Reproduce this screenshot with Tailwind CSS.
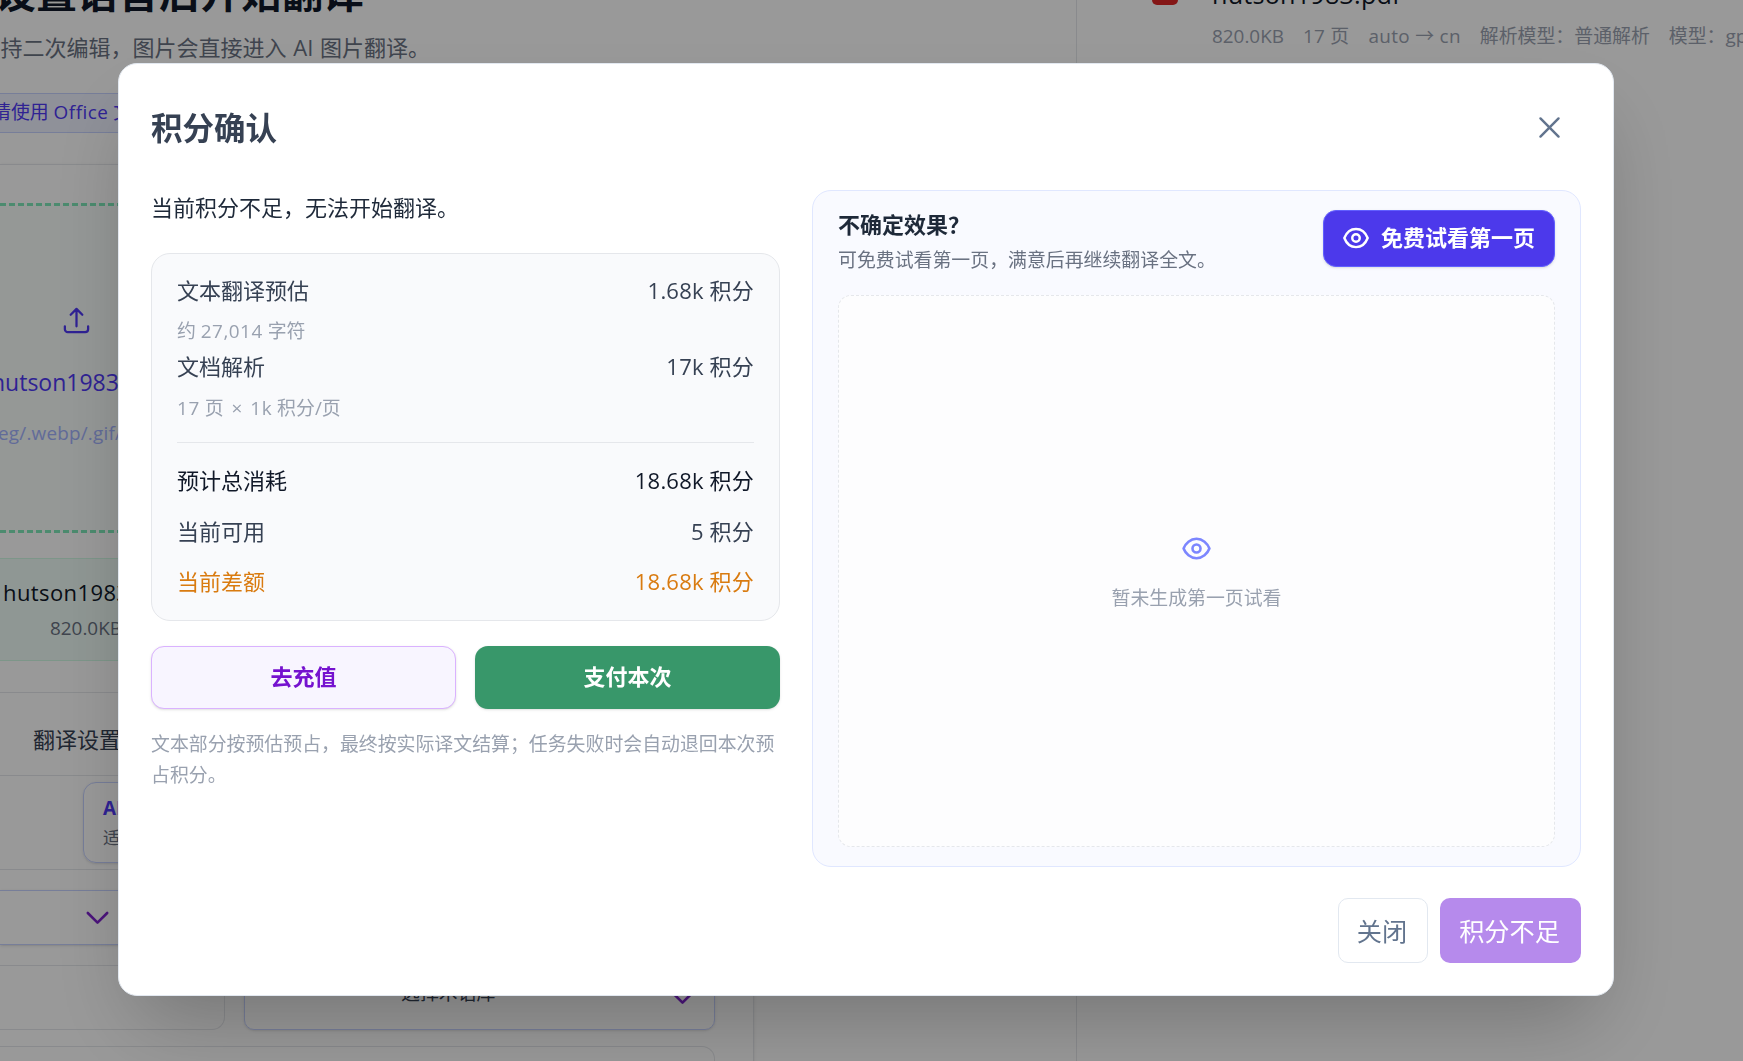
<!DOCTYPE html>
<html lang="zh-CN">
<head>
    <meta charset="UTF-8">
    <title>积分确认</title>
    <script src="https://cdn.jsdelivr.net/npm/@tailwindcss/browser@4"></script>
</head>
<body class="h-screen overflow-hidden bg-white font-['Open_Sans','Noto_Sans_CJK_SC',sans-serif] text-[22px] leading-[32px] text-gray-700">

    <!-- page -->
    <div class="flex h-[1061px] w-[1743px] overflow-hidden whitespace-nowrap">
        <div class="flex w-[1077px] shrink-0 flex-col border-r border-gray-200">
            <div class="flex h-[17px] w-[364px] shrink-0 items-end justify-end text-[41px] leading-[50px] font-bold text-gray-900">设置语言后开始翻译</div>
            <div class="mt-[14px] flex w-[430px] shrink-0 justify-end text-gray-500"><span>支持二次编辑，图片会直接进入 <span class="px-px">AI</span> 图片翻译。</span></div>
            <div class="mt-[30px] flex h-10 w-[754px] shrink-0 items-center border-y border-indigo-200 bg-indigo-50 pb-[2px] text-[18.9px] text-indigo-600">
                <span class="-ml-2">请使用 <span class="tracking-[0.5px]">Office</span> 文件</span>
            </div>

            <div class="mt-[31px] flex h-[900px] w-[754px] shrink-0 flex-col border-t border-r border-gray-200 shadow-sm">
                <div class="mt-[38px] h-[330px] shrink-0 border-y-3 border-dashed border-[#7fe8b9] bg-[#f8fdfb]">
                    <svg class="mt-[99px] ml-[61px] size-[31px] text-indigo-600" viewBox="0 0 24 24" fill="none" stroke="currentColor" stroke-width="1.75" stroke-linecap="round" stroke-linejoin="round">
                        <path d="M3 16.5v2.25A2.25 2.25 0 0 0 5.25 21h13.5A2.25 2.25 0 0 0 21 18.75V16.5M7.5 7.5 12 3m0 0 4.500 4.500M12 3v13.500" />
                    </svg>
                    <div class="mt-[30px] -ml-[9px] text-[23px] text-indigo-600">hutson1983.pdf</div>
                    <div class="mt-[19px] -ml-[2px] text-[18.9px] tracking-[0.2px] text-indigo-300">eg/.webp/.gif/.bmp</div>
                </div>
                <div class="mt-[25px] h-[103px] shrink-0 border-y border-[#d1fae5] bg-[#effcf7] pt-[17px]">
                    <div class="ml-[3px] tracking-[0.4px] text-gray-900">hutson1983.pdf</div>
                    <div class="mt-[4px] ml-[50px] text-[18.9px] text-gray-500">820.0KB</div>
                </div>
                <div class="mt-[31px] h-[84px] shrink-0 border-y border-gray-200 pt-[30px] pl-[33px]">翻译设置</div>
                <div class="mt-[6px] ml-[83px] h-[81px] shrink-0 rounded-[13px] border border-indigo-200 pt-[9px] pl-[19px] shadow-sm">
                    <div class="text-[18.9px] font-bold text-indigo-600">AI 翻译</div>
                    <div class="text-[17.3px] leading-[28px] text-gray-500">适合文档</div>
                </div>
                <div class="mt-[6px] h-px shrink-0 bg-gray-200"></div>
                <div class="mt-[20px] flex h-[55px] shrink-0 items-center border-y border-indigo-200 pl-[82px] shadow-sm">
                    <svg class="size-[31px] text-[#7e22ce]" viewBox="0 0 24 24" fill="none" stroke="currentColor" stroke-width="2" stroke-linecap="round" stroke-linejoin="round"><path d="m4.500 8.500 7.500 7.500 7.500-7.500" /></svg>
                </div>
                <div class="mt-[20px] flex h-[65px] shrink-0">
                    <div class="w-[225px] rounded-r-[13px] border border-l-0 border-gray-200"></div>
                    <div class="ml-[19px] flex w-[471px] items-center justify-between rounded-[10px] border border-indigo-200 pr-[16px] pl-[156px] text-[18.9px] shadow-sm">
                        <span class="-mt-[9px]">选择术语库</span>
                        <svg class="size-[31px] text-[#7e22ce]" viewBox="0 0 24 24" fill="none" stroke="currentColor" stroke-width="2" stroke-linecap="round" stroke-linejoin="round"><path d="m4.500 8.500 7.500 7.500 7.500-7.500" /></svg>
                    </div>
                </div>
                <div class="mt-[16px] h-[60px] w-[715px] shrink-0 rounded-tr-[13px] border-t border-r border-gray-200"></div>
            </div>
        </div>

        <div class="flex pl-[75px]">
            <div class="h-[5px] w-[26px] rounded-b-[6px] bg-[#dc2626]"></div>
            <div class="ml-[34px]">
                <div class="-mt-[24px] text-[25.2px] leading-[36px] tracking-[0.2px] text-gray-900">hutson1983.pdf</div>
                <div class="mt-[8px] flex gap-[19px] text-[18.9px] text-gray-400">
                    <span>820.0KB</span>
                    <span class="tracking-[0.3px]">17 页</span>
                    <span class="tracking-[0.3px]">auto → cn</span>
                    <span>解析模型：普通解析</span>
                    <span>模型：gpt</span>
                </div>
            </div>
        </div>
    </div>

    <!-- dialog -->
    <div class="fixed inset-0 bg-black/40 pt-[63px] pl-[118px]">
        <div class="h-[933px] w-[1496px] rounded-[19px] border border-slate-200 bg-white px-8 shadow-[0_39px_79px_-19px_rgb(0_0_0/0.25)]">
            <div class="flex h-[126px] items-center justify-between pr-[16px]">
                <h2 class="pt-px text-[31.5px] leading-[44px] font-bold text-gray-700">积分确认</h2>
                <svg class="size-[31px] text-slate-500" viewBox="0 0 24 24" fill="none" stroke="currentColor" stroke-width="1.9" stroke-linecap="round"><path d="M5 5l14 14M19 5 5 19" /></svg>
            </div>

            <div class="flex h-[677px] gap-8">
                <div class="w-[629px]">
                    <p class="pt-px text-gray-800">当前积分不足，无法开始翻译。</p>
                    <div class="mt-[30px] h-[368px] rounded-[19px] border border-gray-200 bg-[#f9fafc] px-[25px] pt-[20px]">
                        <div class="flex justify-between"><span>文本翻译预估</span><span class="tracking-[0.2px]">1.68k 积分</span></div>
                        <div class="mt-[13px] text-[18.9px] leading-[25px] text-gray-400">约 <span class="tracking-[0.5px]">27,014</span> 字符</div>
                        <div class="mt-[6px] flex justify-between"><span>文档解析</span><span class="tracking-[0.2px]">17k 积分</span></div>
                        <div class="mt-[14px] text-[18.9px] leading-[25px] text-gray-400"><span class="tracking-[0.6px]">17</span> 页 <span class="px-[3px]">×</span> <span class="tracking-[0.6px]">1k</span> 积分/页</div>
                        <div class="mt-[21px] border-t border-gray-200 pt-[21px]">
                            <div class="flex justify-between text-gray-900"><span>预计总消耗</span><span class="tracking-[0.2px]">18.68k 积分</span></div>
                            <div class="mt-[19px] flex justify-between"><span>当前可用</span><span class="tracking-[0.2px]">5 积分</span></div>
                            <div class="mt-[18px] flex justify-between text-[#d97b10]"><span>当前差额</span><span class="tracking-[0.2px]">18.68k 积分</span></div>
                        </div>
                    </div>
                    <div class="mt-[25px] grid h-[63px] grid-cols-2 gap-[19px] font-bold">
                        <button class="rounded-[13px] border border-purple-300 bg-[#f8f5ff] pb-[3px] text-[#7512cf] shadow-sm">去充值</button>
                        <button class="rounded-[13px] bg-[#38976a] pb-[3px] text-white shadow-sm">支付本次</button>
                    </div>
                    <p class="mt-[20px] text-[18.9px] leading-[31px] text-gray-400">文本部分按预估预占，最终按实际译文结算；任务失败时会自动退回本次预占积分。</p>
                </div>

                <div class="flex w-[769px] flex-col rounded-[19px] border border-indigo-100 bg-[#f9faff] px-[25px] pt-[19px] pb-[19px]">
                    <div class="flex h-[57px] justify-between">
                        <div>
                            <div class="-mt-[2px] font-bold text-gray-800">不确定效果？</div>
                            <div class="mt-[4px] text-[18.9px] text-gray-500">可免费试看第一页，满意后再继续翻译全文。</div>
                        </div>
                        <button class="flex h-[57px] w-[232px] items-center justify-center gap-[12px] rounded-[13px] border border-indigo-500 bg-[#4c39eb] pr-px font-bold text-white shadow-sm">
                            <svg class="-mt-px size-[28px]" viewBox="0 0 24 24" fill="none" stroke="currentColor" stroke-width="2.1" stroke-linejoin="round"><path d="M2 12c1.700-4.400 5.300-7.800 10-7.800s8.300 3.400 10 7.800c-1.700 4.400-5.300 7.800-10 7.800s-8.300-3.400-10-7.800z" /><circle cx="12" cy="12" r="3.200" /></svg>
                            <span class="-mt-1 -ml-px">免费试看第一页</span>
                        </button>
                    </div>
                    <div class="mt-[28px] flex grow flex-col items-center rounded-[13px] border border-dashed border-gray-200 bg-[#fdfdfe] pt-[237px]">
                        <svg class="size-[31px] text-indigo-400" viewBox="0 0 24 24" fill="none" stroke="currentColor" stroke-width="2" stroke-linejoin="round"><path d="M2 12c1.500-4 5.300-7.500 10-7.500s8.500 3.500 10 7.500c-1.500 4-5.300 7.500-10 7.500s-8.500-3.500-10-7.500z" /><circle cx="12" cy="12" r="3.100" /></svg>
                        <div class="mt-[18px] text-[18.9px] text-gray-400">暂未生成第一页试看</div>
                    </div>
                </div>
            </div>

            <div class="mt-[31px] flex h-[65px] justify-end gap-3 text-[25.2px]">
                <button class="w-[90px] rounded-[10px] border border-slate-200 pr-[2px] text-slate-500">关闭</button>
                <button class="w-[141px] rounded-[10px] bg-[#b68aec] pr-[2px] text-white">积分不足</button>
            </div>
        </div>
    </div>
</body>
</html>
